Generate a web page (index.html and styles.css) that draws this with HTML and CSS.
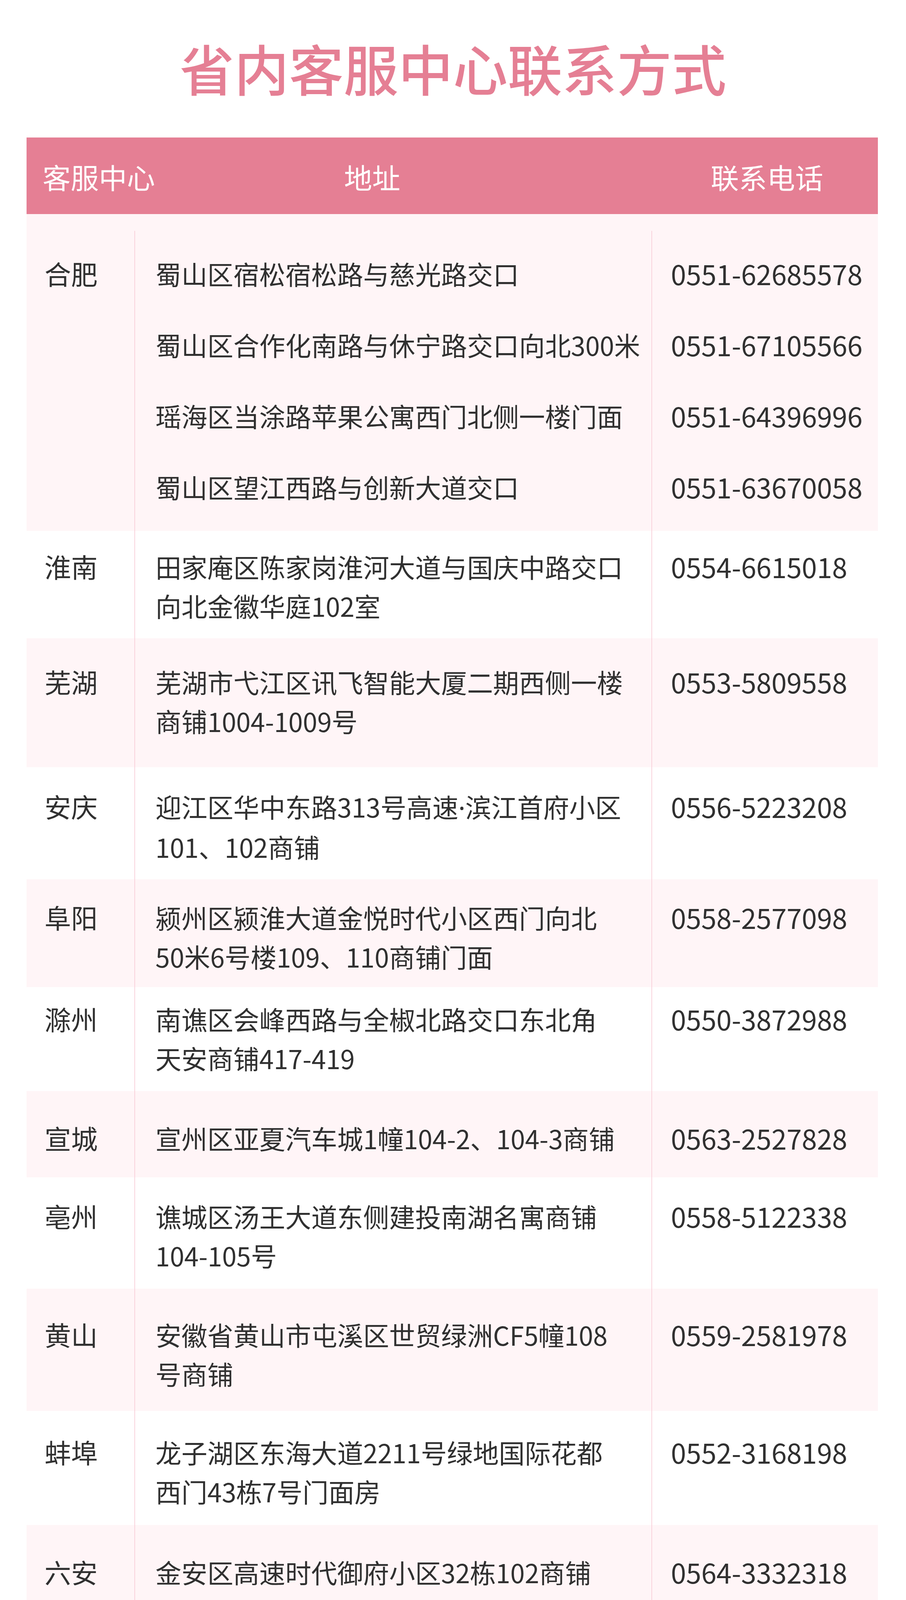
FILE: index.html
```html
<!DOCTYPE html>
<html lang="zh-CN">
<head>
<meta charset="utf-8">
<title>省内客服中心联系方式</title>
<link rel="stylesheet" href="styles.css">
</head>
<body>
<div class="page">
  <h1 class="title">省内客服中心联系方式</h1>
  <div class="table">
    <div class="thead">
      <div class="th th-city">客服中心</div>
      <div class="th th-addr">地址</div>
      <div class="th th-tel">联系电话</div>
    </div>

    <div class="row row-hefei">
      <div class="cell city">合肥</div>
      <div class="cell addr">
        <div class="item">蜀山区宿松宿松路与慈光路交口</div>
        <div class="item">蜀山区合作化南路与休宁路交口向北300米</div>
        <div class="item">瑶海区当涂路苹果公寓西门北侧一楼门面</div>
        <div class="item">蜀山区望江西路与创新大道交口</div>
      </div>
      <div class="cell tel">
        <div class="item">0551-62685578</div>
        <div class="item">0551-67105566</div>
        <div class="item">0551-64396996</div>
        <div class="item">0551-63670058</div>
      </div>
    </div>

    <div class="row">
      <div class="cell city">淮南</div>
      <div class="cell addr">田家庵区陈家岗淮河大道与国庆中路交口<br>向北金徽华庭102室</div>
      <div class="cell tel">0554-6615018</div>
    </div>
    <div class="row">
      <div class="cell city">芜湖</div>
      <div class="cell addr">芜湖市弋江区讯飞智能大厦二期西侧一楼<br>商铺1004-1009号</div>
      <div class="cell tel">0553-5809558</div>
    </div>
    <div class="row">
      <div class="cell city">安庆</div>
      <div class="cell addr">迎江区华中东路313号高速<span class="dot">·</span>滨江首府小区<br>101、102商铺</div>
      <div class="cell tel">0556-5223208</div>
    </div>
    <div class="row">
      <div class="cell city">阜阳</div>
      <div class="cell addr">颍州区颍淮大道金悦时代小区西门向北<br>50米6号楼109、110商铺门面</div>
      <div class="cell tel">0558-2577098</div>
    </div>
    <div class="row">
      <div class="cell city">滁州</div>
      <div class="cell addr">南谯区会峰西路与全椒北路交口东北角<br>天安商铺417-419</div>
      <div class="cell tel">0550-3872988</div>
    </div>
    <div class="row">
      <div class="cell city">宣城</div>
      <div class="cell addr">宣州区亚夏汽车城1幢104-2、104-3商铺</div>
      <div class="cell tel">0563-2527828</div>
    </div>
    <div class="row">
      <div class="cell city">亳州</div>
      <div class="cell addr">谯城区汤王大道东侧建投南湖名寓商铺<br>104-105号</div>
      <div class="cell tel">0558-5122338</div>
    </div>
    <div class="row">
      <div class="cell city">黄山</div>
      <div class="cell addr">安徽省黄山市屯溪区世贸绿洲CF5幢108<br>号商铺</div>
      <div class="cell tel">0559-2581978</div>
    </div>
    <div class="row">
      <div class="cell city">蚌埠</div>
      <div class="cell addr">龙子湖区东海大道2211号绿地国际花都<br>西门43栋7号门面房</div>
      <div class="cell tel">0552-3168198</div>
    </div>
    <div class="row">
      <div class="cell city">六安</div>
      <div class="cell addr">金安区高速时代御府小区32栋102商铺</div>
      <div class="cell tel">0564-3332318</div>
    </div>
    <div class="row">
      <div class="cell city">池州</div>
      <div class="cell addr">贵池区长江南路波斯曼广场412号商铺</div>
      <div class="cell tel">0566-2082068</div>
    </div>
    <div class="row">
      <div class="cell city">宿州</div>
      <div class="cell addr">埇桥区迎宾大道与磬云南路交口向南200米<br>路东</div>
      <div class="cell tel">0557-3660020</div>
    </div>
    <div class="row">
      <div class="cell city">淮北</div>
      <div class="cell addr">相山区人民中路与南湖路交叉口向南100米</div>
      <div class="cell tel">0561-3110188</div>
    </div>
    <div class="row">
      <div class="cell city">马鞍山</div>
      <div class="cell addr">花山区国际华城三村1-102室</div>
      <div class="cell tel">0555-2362111</div>
    </div>
    <div class="row">
      <div class="cell city">铜陵</div>
      <div class="cell addr">铜官区华源翠湖湾华山南道389号—409号<br>商铺</div>
      <div class="cell tel">0562-2897668</div>
    </div>
  </div>
</div>
</body>
</html>
```

FILE: styles.css
```css
* {
  box-sizing: border-box;
}

html, body {
  margin: 0;
  padding: 0;
  background: #ffffff;
}

body {
  font-family: "Noto Sans CJK SC", "Noto Sans", sans-serif;
  color: #303030;
}

.page {
  width: 2320px;
  height: 5330px;
  overflow: hidden;
}

.title {
  margin: 0;
  height: 352px;
  line-height: 344px;
  text-align: center;
  font-size: 140px;
  font-weight: 500;
  color: #e57f94;
  letter-spacing: 0;
}

.table {
  margin-left: 68px;
  width: 2180px;
}

.thead {
  display: grid;
  grid-template-columns: 276px 1324px 580px;
  height: 196px;
  background: #e57f94;
  color: #ffffff;
  font-size: 72px;
  line-height: 200px;
  white-space: nowrap;
}

.th-city { padding-left: 41px; }
.th-addr { padding-left: 537px; }
.th-tel  { padding-left: 152px; }

.row {
  display: grid;
  grid-template-columns: 276px 1324px 580px;
  background: #ffffff;
  --pt: 50px;
}

.row:nth-child(even) {
  background: #fff5f7;
}

.cell {
  padding-top: var(--pt);
  line-height: 100px;
  white-space: nowrap;
}

.city {
  font-size: 68px;
  padding-left: 46px;
}

.addr {
  font-size: 66.5px;
  padding-left: 52px;
  border-left: 2px solid #f9d3dc;
}

.dot {
  font-family: "Noto Sans", "Liberation Sans", sans-serif;
}

.tel {
  font-size: 70px;
  padding-left: 48px;
  border-left: 2px solid #f9d3dc;
}

/* Hefei group: lines start lower, dividers start after a top band */
.row-hefei {
  height: 811px;
  padding-top: 43px;
  --pt: 59px;
}

.row-hefei .addr,
.row-hefei .tel {
  display: flex;
  flex-direction: column;
  gap: 82px;
}

.row-hefei .item {
  height: 100px;
}

/* individual row heights and top paddings */
.row:nth-child(3)  { height: 275px; --pt: 41px; }
.row:nth-child(4)  { height: 330px; --pt: 61px; }
.row:nth-child(5)  { height: 287px; --pt: 50px; }
.row:nth-child(6)  { height: 276px; --pt: 47px; }
.row:nth-child(7)  { height: 266px; --pt: 31px; }
.row:nth-child(8)  { height: 221px; --pt: 70px; }
.row:nth-child(9)  { height: 285px; --pt: 49px; }
.row:nth-child(10) { height: 313px; --pt: 67px; }
.row:nth-child(11) { height: 292px; --pt: 55px; }
.row:nth-child(12) { height: 219px; --pt: 70px; }
.row:nth-child(13) { height: 204px; --pt: 67px; }
.row:nth-child(14) { height: 282px; --pt: 62px; }
.row:nth-child(15) { height: 197px; --pt: 46px; }
.row:nth-child(16) { height: 219px; --pt: 66px; }
.row:nth-child(17) { height: 305px; --pt: 65px; }
```
